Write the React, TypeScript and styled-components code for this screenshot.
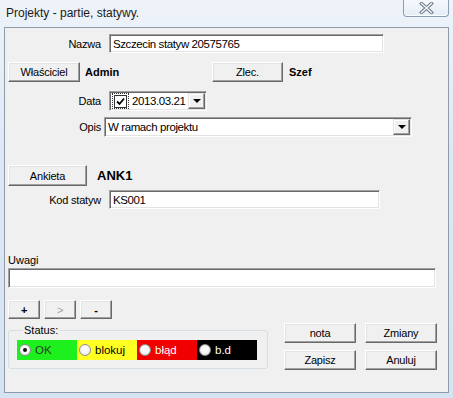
import React from "react";
import styled, { createGlobalStyle, css } from "styled-components";

const GlobalStyle = createGlobalStyle`
  html, body {
    margin: 0;
    padding: 0;
    background: #dbe6f3;
  }
  * {
    box-sizing: border-box;
  }
`

const Window = styled.div`
  width: 453px;
  height: 398px;
  display: flex;
  flex-direction: column;
  background: linear-gradient(180deg, #eef3f9 0%, #dde8f5 40%, #d6e3f2 100%);
  font-family: "Liberation Sans", Arial, sans-serif;
  font-size: 11px;
  color: #000;
  overflow: hidden;
`

const TitleBar = styled.div`
  height: 27px;
  display: flex;
  justify-content: space-between;
  align-items: flex-start;
  padding: 0 4px 0 6px;
`

const TitleText = styled.div`
  font-family: "Liberation Sans", Arial, sans-serif;
  font-size: 12px;
  line-height: 16px;
  padding-top: 5px;
  color: #1b1b1b;
`

const CloseButton = styled.div`
  width: 46px;
  height: 17px;
  display: flex;
  align-items: center;
  justify-content: center;
  border: 1px solid #8d9db3;
  border-top: none;
  border-radius: 0 0 4px 4px;
  background: linear-gradient(180deg, #f6f8fb 0%, #e6edf6 100%);
  box-shadow: inset 0 -1px 0 #fbfdff;
`

const Client = styled.div`
  margin: 0 4px;
  height: 366px;
  border: 1px solid #8e9bab;
  background: #f0f0f0;
  display: flex;
  flex-direction: column;
  padding: 0 3px;
`

const Row = styled.div<{ $top: number; $gap?: number; $h?: number }>`
  display: flex;
  align-items: center;
  margin-top: ${(p) => p.$top}px;
  gap: ${(p) => p.$gap ?? 0}px;
  height: ${(p) => p.$h ?? 20}px;
`

const Label = styled.div<{ $width?: number }>`
  width: ${(p) => p.$width ?? 93}px;
  text-align: right;
  flex: none;
  white-space: nowrap;
  letter-spacing: -0.2px;
`

const sunken = css`
  border-style: solid;
  border-width: 1px;
  border-color: #a0a0a0 #ffffff #ffffff #a0a0a0;
  box-shadow: inset 1px 1px 0 #696969, inset -1px -1px 0 #e3e3e3;
  background: #fff;
`

const fieldText = css`
  font-size: 11.5px;
  letter-spacing: -0.4px;
`

const TextBox = styled.div<{ $width: number; $height?: number }>`
  ${sunken};
  ${fieldText};
  width: ${(p) => p.$width}px;
  height: ${(p) => p.$height ?? 19}px;
  padding: 0 3px;
  display: flex;
  align-items: center;
  white-space: nowrap;
  overflow: hidden;
`

const Button = styled.div<{ $width: number; $height?: number; $disabled?: boolean }>`
  width: ${(p) => p.$width}px;
  height: ${(p) => p.$height ?? 20}px;
  flex: none;
  display: flex;
  align-items: center;
  justify-content: center;
  background: #f0f0f0;
  border-style: solid;
  border-width: 1px;
  border-color: #ffffff #696969 #696969 #ffffff;
  box-shadow: inset -1px -1px 0 #a0a0a0, inset 1px 1px 0 #e3e3e3;
  color: ${(p) => (p.$disabled ? "#a0a0a0" : "#000")};
  font-size: 11px;
  letter-spacing: -0.2px;
`

const Value = styled.div<{ $width?: number; $size?: number }>`
  font-weight: bold;
  font-size: ${(p) => p.$size ?? 11}px;
  width: ${(p) => (p.$width ? `${p.$width}px` : "auto")};
  flex: none;
`

const DropArrow = styled.div`
  width: 17px;
  height: 16px;
  flex: none;
  margin-left: auto;
  display: flex;
  align-items: center;
  justify-content: center;
  background: #f0f0f0;
  border-style: solid;
  border-width: 1px;
  border-color: #e3e3e3 #696969 #696969 #e3e3e3;
  box-shadow: inset -1px -1px 0 #a0a0a0, inset 1px 1px 0 #fff;

  &::after {
    content: "";
    border-left: 4px solid transparent;
    border-right: 4px solid transparent;
    border-top: 4px solid #000;
  }
`

const DateBox = styled.div`
  ${sunken};
  ${fieldText};
  width: 98px;
  height: 20px;
  display: flex;
  align-items: center;
  padding: 0 1px 0 2px;
`

const CheckFocus = styled.div`
  width: 17px;
  height: 16px;
  border: 1px dotted #333;
  display: flex;
  align-items: center;
  justify-content: center;
  margin-right: 3px;
`

const CheckBox = styled.div`
  width: 13px;
  height: 13px;
  border: 1px solid #333;
  background: #fff;
  display: flex;
  align-items: center;
  justify-content: center;
`

const ComboBox = styled.div`
  ${sunken};
  ${fieldText};
  width: 308px;
  height: 20px;
  display: flex;
  align-items: center;
  padding: 0 1px 0 3px;
`

const SmallLabel = styled.div`
  height: 13px;
  line-height: 13px;
`

const BottomArea = styled.div`
  display: flex;
  align-items: flex-start;
  margin-top: 4px;
`

const StatusBox = styled.fieldset`
  margin: 1px 0 0 0;
  width: 260px;
  height: 45px;
  padding: 4px 0 0 8px;
  border: 1px solid #d5dfe5;
  border-radius: 3px;
  display: flex;
  align-items: flex-start;
`

const Legend = styled.legend`
  padding: 0 1px;
  margin-left: 6px;
  font-size: 11px;
  line-height: 12px;
`

const Strip = styled.div<{ $bg: string; $fg: string }>`
  width: 60px;
  height: 20px;
  background: ${(p) => p.$bg};
  color: ${(p) => p.$fg};
  display: flex;
  align-items: center;
  gap: 4px;
  padding-left: 2px;
  font-size: 11.5px;
`

const Radio = styled.div<{ $on?: boolean }>`
  width: 12px;
  height: 12px;
  border-radius: 50%;
  border: 1px solid #8f8f8f;
  background: radial-gradient(circle at 50% 40%, #ffffff 0%, #f4f4f4 55%, #d9d9d9 100%);
  display: flex;
  align-items: center;
  justify-content: center;

  &::after {
    content: "";
    width: 4px;
    height: 4px;
    border-radius: 50%;
    background: ${(p) => (p.$on ? "#111" : "transparent")};
  }
`

const ActionGrid = styled.div`
  margin-left: 16px;
  display: grid;
  grid-template-columns: 72px 72px;
  column-gap: 9px;
  row-gap: 7px;
`

const App = () => {
    return (
        <>
            <GlobalStyle/>
            <Window>
                <TitleBar>
                    <TitleText>Projekty - partie, statywy.</TitleText>
                    <CloseButton>
                        <svg width="15" height="12" viewBox="0 0 15 12">
                            <path d="M2.5 1.5 L12.5 10.5 M12.5 1.5 L2.5 10.5" stroke="#6d7b8f" strokeWidth="3.4" strokeLinecap="square"/>
                            <path d="M2.5 1.5 L12.5 10.5 M12.5 1.5 L2.5 10.5" stroke="#f6f8fb" strokeWidth="1.4" strokeLinecap="square"/>
                        </svg>
                    </CloseButton>
                </TitleBar>
                <Client>
                    <Row $top={6} $gap={8} $h={19}>
                        <Label>Nazwa</Label>
                        <TextBox $width={275}>Szczecin statyw 20575765</TextBox>
                    </Row>
                    <Row $top={9} $gap={0}>
                        <Button $width={72}>Właściciel</Button>
                        <Value $width={132} style={{paddingLeft: 5}}>Admin</Value>
                        <Button $width={71}>Zlec.</Button>
                        <Value style={{paddingLeft: 6}}>Szef</Value>
                    </Row>
                    <Row $top={9} $gap={8}>
                        <Label>Data</Label>
                        <DateBox>
                            <CheckFocus>
                                <CheckBox>
                                    <svg width="9" height="9" viewBox="0 0 9 9">
                                        <path d="M1 4.5 L3.5 7 L8 1.5" stroke="#000" strokeWidth="1.8" fill="none"/>
                                    </svg>
                                </CheckBox>
                            </CheckFocus>
                            2013.03.21
                            <DropArrow/>
                        </DateBox>
                    </Row>
                    <Row $top={6} $gap={3}>
                        <Label>Opis</Label>
                        <ComboBox>
                            W ramach projektu
                            <DropArrow/>
                        </ComboBox>
                    </Row>
                    <Row $top={28} $gap={10} $h={21}>
                        <Button $width={79} $height={21}>Ankieta</Button>
                        <Value $size={13}>ANK1</Value>
                    </Row>
                    <Row $top={4} $gap={8} $h={19}>
                        <Label>Kod statyw</Label>
                        <TextBox $width={271}>KS001</TextBox>
                    </Row>
                    <Row $top={45} $h={13}>
                        <SmallLabel>Uwagi</SmallLabel>
                    </Row>
                    <Row $top={1}>
                        <TextBox $width={428} $height={20}/>
                    </Row>
                    <Row $top={12} $gap={4} $h={19}>
                        <Button $width={32} $height={19} style={{fontWeight: "bold"}}>+</Button>
                        <Button $width={32} $height={19} $disabled>&gt;</Button>
                        <Button $width={32} $height={19} style={{fontWeight: "bold"}}>-</Button>
                    </Row>
                    <BottomArea>
                        <StatusBox>
                            <Legend>Status:</Legend>
                            <Strip $bg="#1ef01e" $fg="#2e3b2e"><Radio $on/>OK</Strip>
                            <Strip $bg="#ffff22" $fg="#000"><Radio/>blokuj</Strip>
                            <Strip $bg="#f00000" $fg="#fff"><Radio/>błąd</Strip>
                            <Strip $bg="#000000" $fg="#fff"><Radio/>b.d</Strip>
                        </StatusBox>
                        <ActionGrid>
                            <Button $width={72}>nota</Button>
                            <Button $width={72}>Zmiany</Button>
                            <Button $width={72}>Zapisz</Button>
                            <Button $width={72}>Anuluj</Button>
                        </ActionGrid>
                    </BottomArea>
                </Client>
            </Window>
        </>
    )
}
export default App
